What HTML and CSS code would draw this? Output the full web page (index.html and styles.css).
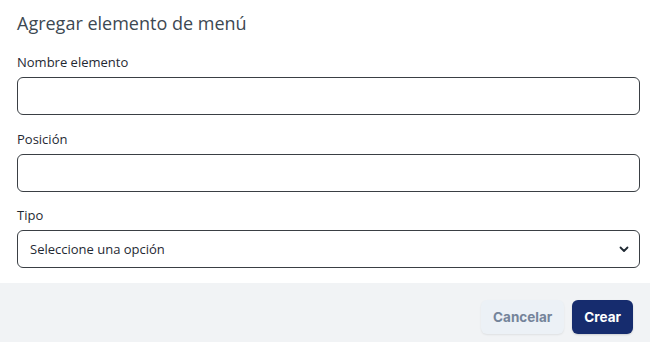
FILE: index.html
```html
<!DOCTYPE html>
<html lang="es">
<head>
  <meta charset="UTF-8" />
  <meta name="viewport" content="width=device-width, initial-scale=1" />
  <title>Agregar elemento de menú</title>
  <link rel="stylesheet" href="styles.css">
</head>
<body>
  <div class="modal">
    <div class="modal-body">
      <h3>Agregar elemento de menú</h3>

      <label for="nombre">Nombre elemento</label>
      <input type="text" id="nombre" />

      <label for="posicion">Posición</label>
      <input type="text" id="posicion" />

      <label for="tipo" class="label-tight">Tipo</label>
      <div class="select-wrap">
        <select id="tipo">
          <option value="" selected>Seleccione una opción</option>
          <option value="link">Enlace</option>
          <option value="page">Página</option>
        </select>
        <svg class="chevron" width="10" height="7" viewBox="0 0 10 7">
          <path d="M1.5 1.5 L5 5 L8.5 1.5" fill="none" stroke="#1f2933" stroke-width="1.8" stroke-linecap="round" stroke-linejoin="round"/>
        </svg>
      </div>
    </div>

    <div class="modal-footer">
      <button class="btn btn-cancel">Cancelar</button>
      <button class="btn btn-primary">Crear</button>
    </div>
  </div>
</body>
</html>
```

FILE: styles.css
```css
body {
  margin: 0; padding: 0;
  font-family: "Open Sans", "Lato", sans-serif;
  background: #fff;
  color: #1f2933;
}
.modal {
  width: 650px;
  height: 342px;
  display: flex;
  flex-direction: column;
}
.modal-body {
  padding: 11px 10px 0 17px;
  flex: 1;
}
h3 {
  margin: 0 0 18px;
  font-size: 18px;
  font-weight: 400;
  color: #3d4852;
  line-height: 24px;
}
label {
  display: block;
  font-size: 13px;
  line-height: 18px;
  color: #1f2933;
  margin-bottom: 6px;
}
.label-tight {
  margin-top: -1px;
}
input[type="text"], select {
  display: block;
  width: 100%;
  height: 38px;
  box-sizing: border-box;
  border: 1px solid #3a3f44;
  border-radius: 6px;
  background: #fff;
  font-family: inherit;
  font-size: 13px;
  color: #1f2933;
  padding: 0 12px;
  margin: 0 0 15px;
  outline: none;
}
.select-wrap {
  position: relative;
}
select {
  appearance: none;
  margin-bottom: 0;
}
.chevron {
  position: absolute;
  right: 11px;
  top: 16px;
  pointer-events: none;
}
.modal-footer {
  background: #f1f3f5;
  height: 59px;
  box-sizing: border-box;
  display: flex;
  justify-content: flex-end;
  align-items: flex-start;
  gap: 8px;
  padding: 17px 17px 0;
}
.btn {
  font-family: "Inter", sans-serif;
  font-weight: 700;
  font-size: 13.5px;
  height: 34px;
  border: none;
  border-radius: 6px;
  cursor: pointer;
  padding: 0 12px;
}
.btn-cancel {
  background: #ecf1f6;
  color: #74849a;
  box-shadow: 0 1px 2px rgb(0 0 0 / 0.08);
}
.btn-primary {
  background: #162c6e;
  color: #fff;
  box-shadow: 0 1px 2px rgb(0 0 0 / 0.15);
}
```
